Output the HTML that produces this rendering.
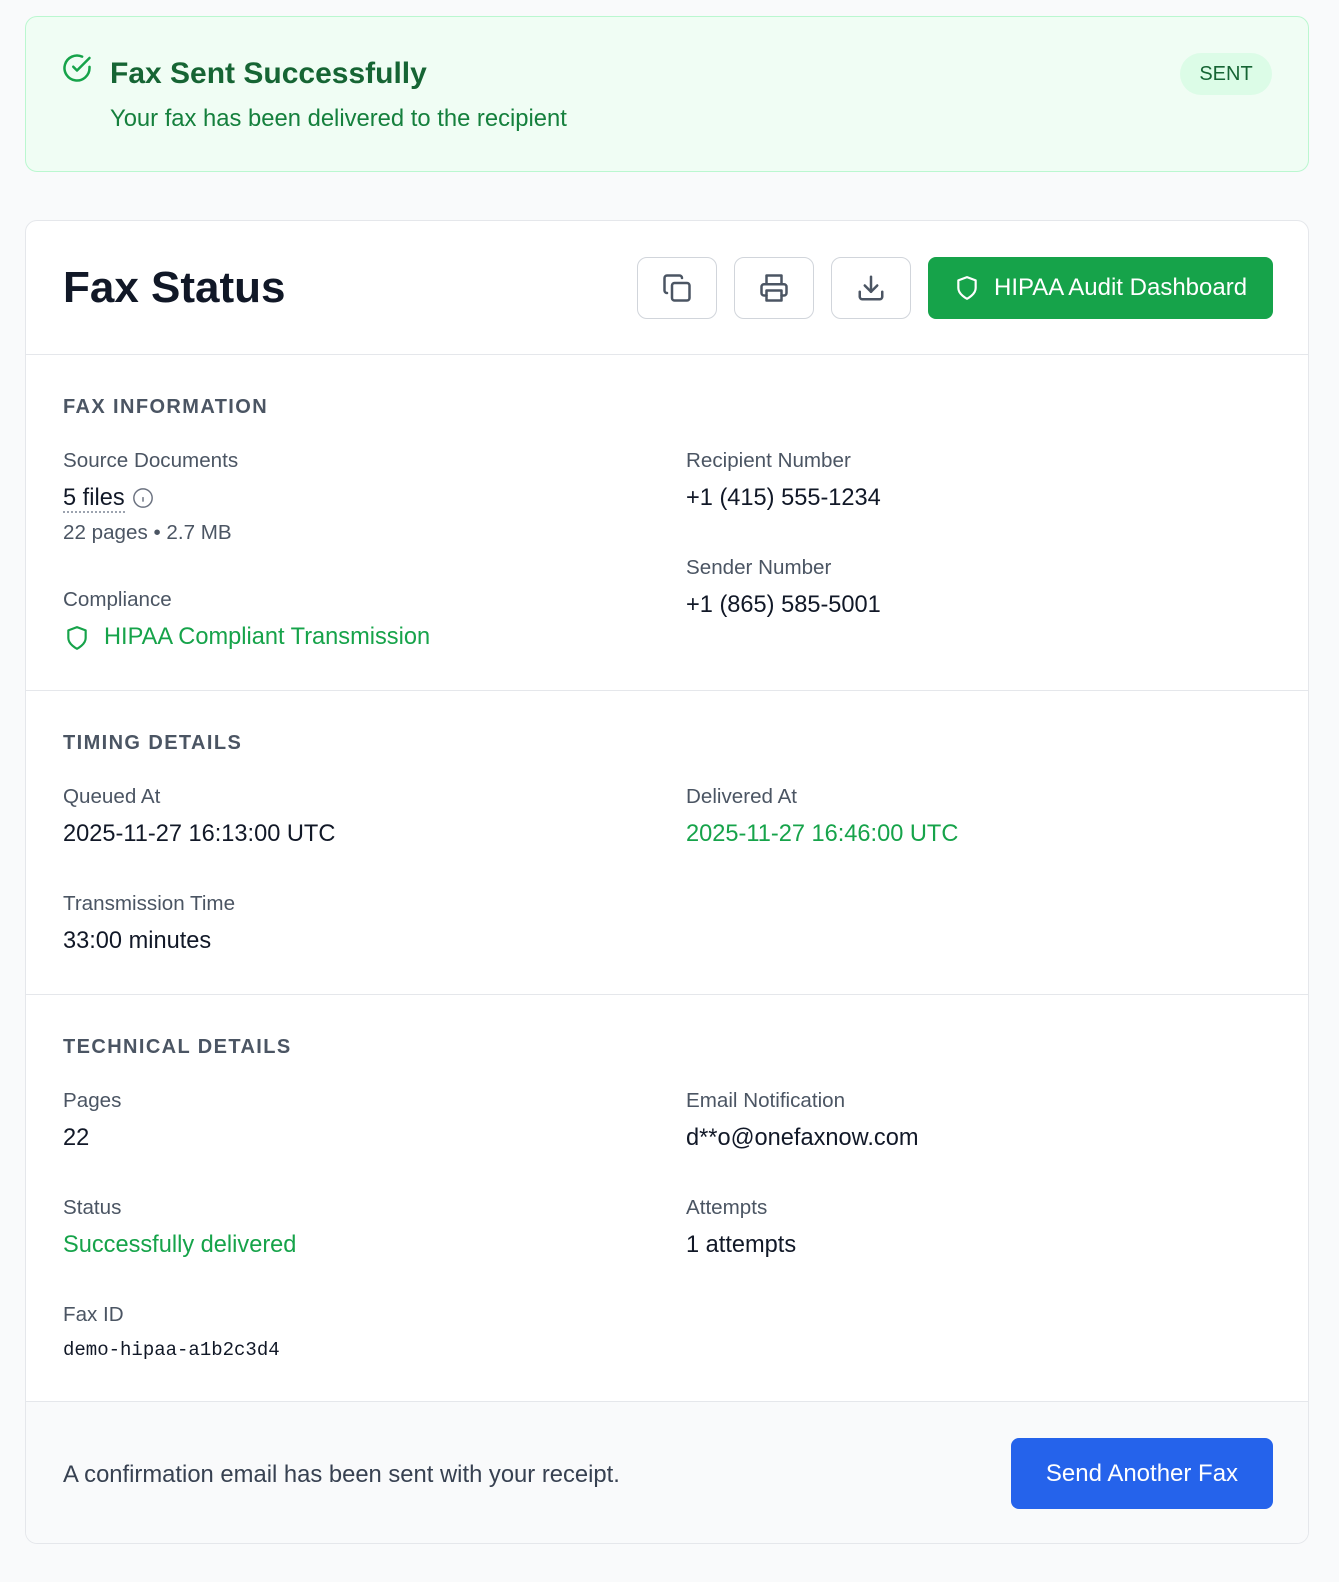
<!DOCTYPE html>
<html><head><meta charset="utf-8"><style>
*{box-sizing:border-box;margin:0;padding:0}
body{width:1339px;height:1582px;background:#f9fafb;font-family:"Liberation Sans",Arial,sans-serif;position:relative;overflow:hidden}
.banner{position:absolute;left:25px;top:16px;width:1284px;height:156px;background:#f0fdf4;border:1px solid #bbf7d0;border-radius:12px}
.banner h1{position:absolute;left:84px;top:40px;font-size:30px;font-weight:bold;color:#166534}
.banner p{position:absolute;left:84px;top:88px;font-size:23.8px;color:#15803d}
.badge{position:absolute;right:36px;top:36px;width:92px;height:42px;border-radius:21px;background:#dcfce7;color:#166534;font-size:20px;text-align:center;line-height:42px}
.card{position:absolute;left:25px;top:220px;width:1284px;height:1324px;background:#fff;border:1px solid #e5e7eb;border-radius:12px;overflow:hidden}
.hdr{height:134px;border-bottom:1px solid #e5e7eb;position:relative}
.hdr h2{position:absolute;left:37px;top:42px;font-size:44px;font-weight:bold;color:#111827}
.ib{position:absolute;top:36px;width:80px;height:62px;border:1px solid #d1d5db;border-radius:10px;display:flex;align-items:center;justify-content:center}
.gb{position:absolute;left:902px;top:36px;width:345px;height:62px;background:#16a34a;border-radius:8px;color:#fff;font-size:24px;display:flex;align-items:center;padding-left:26px;gap:14px}
.sec{position:relative;border-bottom:1px solid #e5e7eb}
.st{position:absolute;left:37px;font-size:20px;font-weight:bold;letter-spacing:1.4px;color:#4b5563}
.l{position:absolute;font-size:20.6px;color:#4b5563}
.v{position:absolute;font-size:23.6px;color:#111827}
.g{color:#16a34a}
.foot{position:absolute;left:0;top:1180px;width:100%;height:144px;background:#f9fafb}
.foot p{position:absolute;left:37px;top:59px;font-size:23.8px;color:#374151}
.btn{position:absolute;left:985px;top:36px;width:262px;height:71px;background:#2563eb;border-radius:8px;color:#fff;font-size:24px;text-align:center;line-height:71px}
</style></head><body>
<div class="banner">
<svg style="position:absolute;left:36px;top:36px" width="30" height="30" viewBox="0 0 24 24" fill="none" stroke="#16a34a" stroke-width="2" stroke-linecap="round" stroke-linejoin="round"><path d="M22 11.1V12a10 10 0 1 1-5.9-9.1"/><path d="M22 4 12 14l-3-3"/></svg>
<h1>Fax Sent Successfully</h1>
<p>Your fax has been delivered to the recipient</p>
<div class="badge">SENT</div>
</div>
<div class="card">
<div class="hdr"><h2>Fax Status</h2>
<div class="ib" style="left:611px"><svg width="30" height="30" viewBox="0 0 24 24" fill="none" stroke="#4b5563" stroke-width="2" stroke-linecap="round" stroke-linejoin="round"><rect x="8" y="8" width="14" height="14" rx="2"/><path d="M4 16c-1.1 0-2-.9-2-2V4c0-1.1.9-2 2-2h10c1.1 0 2 .9 2 2"/></svg></div>
<div class="ib" style="left:708px"><svg width="30" height="30" viewBox="0 0 24 24" fill="none" stroke="#4b5563" stroke-width="2" stroke-linecap="round" stroke-linejoin="round"><path d="M6 9V2h12v7"/><path d="M6 18H4a2 2 0 0 1-2-2v-5a2 2 0 0 1 2-2h16a2 2 0 0 1 2 2v5a2 2 0 0 1-2 2h-2"/><rect x="6" y="14" width="12" height="8"/></svg></div>
<div class="ib" style="left:805px"><svg width="30" height="30" viewBox="0 0 24 24" fill="none" stroke="#4b5563" stroke-width="2" stroke-linecap="round" stroke-linejoin="round"><path d="M21 15v4a2 2 0 0 1-2 2H5a2 2 0 0 1-2-2v-4"/><path d="M7 10l5 5 5-5"/><path d="M12 15V3"/></svg></div>
<div class="gb"><svg width="26" height="28" viewBox="0 0 24 24" fill="none" stroke="#fff" stroke-width="2" stroke-linejoin="round"><path d="M12 22s8-4 8-10V5l-8-3-8 3v7c0 6 8 10 8 10z"/></svg>HIPAA Audit Dashboard</div>
</div>
<div class="sec" style="height:336px">
<div class="st" style="top:41px">FAX INFORMATION</div>
<div class="l" style="left:37px;top:94px">Source Documents</div>
<div class="v" style="left:37px;top:130px;border-bottom:2px dotted #9ca3af;line-height:26px">5 files</div>
<svg style="position:absolute;left:106px;top:132px" width="22" height="22" viewBox="0 0 24 24" fill="none" stroke="#6b7280" stroke-width="1.6"><circle cx="12" cy="12" r="10"/><path d="M12 16v-5M12 8h0"/></svg>
<div class="l" style="left:37px;top:166px">22 pages • 2.7 MB</div>
<div class="l" style="left:37px;top:233px">Compliance</div>
<svg style="position:absolute;left:38px;top:269px" width="26" height="28" viewBox="0 0 24 24" fill="none" stroke="#16a34a" stroke-width="2" stroke-linejoin="round"><path d="M12 22s8-4 8-10V5l-8-3-8 3v7c0 6 8 10 8 10z"/></svg>
<div class="v g" style="left:78px;top:269px">HIPAA Compliant Transmission</div>
<div class="l" style="left:660px;top:94px">Recipient Number</div>
<div class="v" style="left:660px;top:130px">+1 (415) 555-1234</div>
<div class="l" style="left:660px;top:201px">Sender Number</div>
<div class="v" style="left:660px;top:237px">+1 (865) 585-5001</div>
</div>
<div class="sec" style="height:304px">
<div class="st" style="top:41px">TIMING DETAILS</div>
<div class="l" style="left:37px;top:94px">Queued At</div>
<div class="v" style="left:37px;top:130px">2025-11-27 16:13:00 UTC</div>
<div class="l" style="left:37px;top:201px">Transmission Time</div>
<div class="v" style="left:37px;top:237px">33:00 minutes</div>
<div class="l" style="left:660px;top:94px">Delivered At</div>
<div class="v g" style="left:660px;top:130px">2025-11-27 16:46:00 UTC</div>
</div>
<div class="sec" style="height:406px;border-bottom:none">
<div class="st" style="top:41px">TECHNICAL DETAILS</div>
<div class="l" style="left:37px;top:94px">Pages</div>
<div class="v" style="left:37px;top:130px">22</div>
<div class="l" style="left:37px;top:201px">Status</div>
<div class="v g" style="left:37px;top:237px">Successfully delivered</div>
<div class="l" style="left:37px;top:308px">Fax ID</div>
<div class="v" style="left:37px;top:344px;font-family:'Liberation Mono',monospace;font-size:19px">demo-hipaa-a1b2c3d4</div>
<div class="l" style="left:660px;top:94px">Email Notification</div>
<div class="v" style="left:660px;top:130px">d**o@onefaxnow.com</div>
<div class="l" style="left:660px;top:201px">Attempts</div>
<div class="v" style="left:660px;top:237px">1 attempts</div>
</div>
<div class="foot" style="border-top:1px solid #e5e7eb"><p>A confirmation email has been sent with your receipt.</p><div class="btn">Send Another Fax</div></div>
</div>
</body></html>
